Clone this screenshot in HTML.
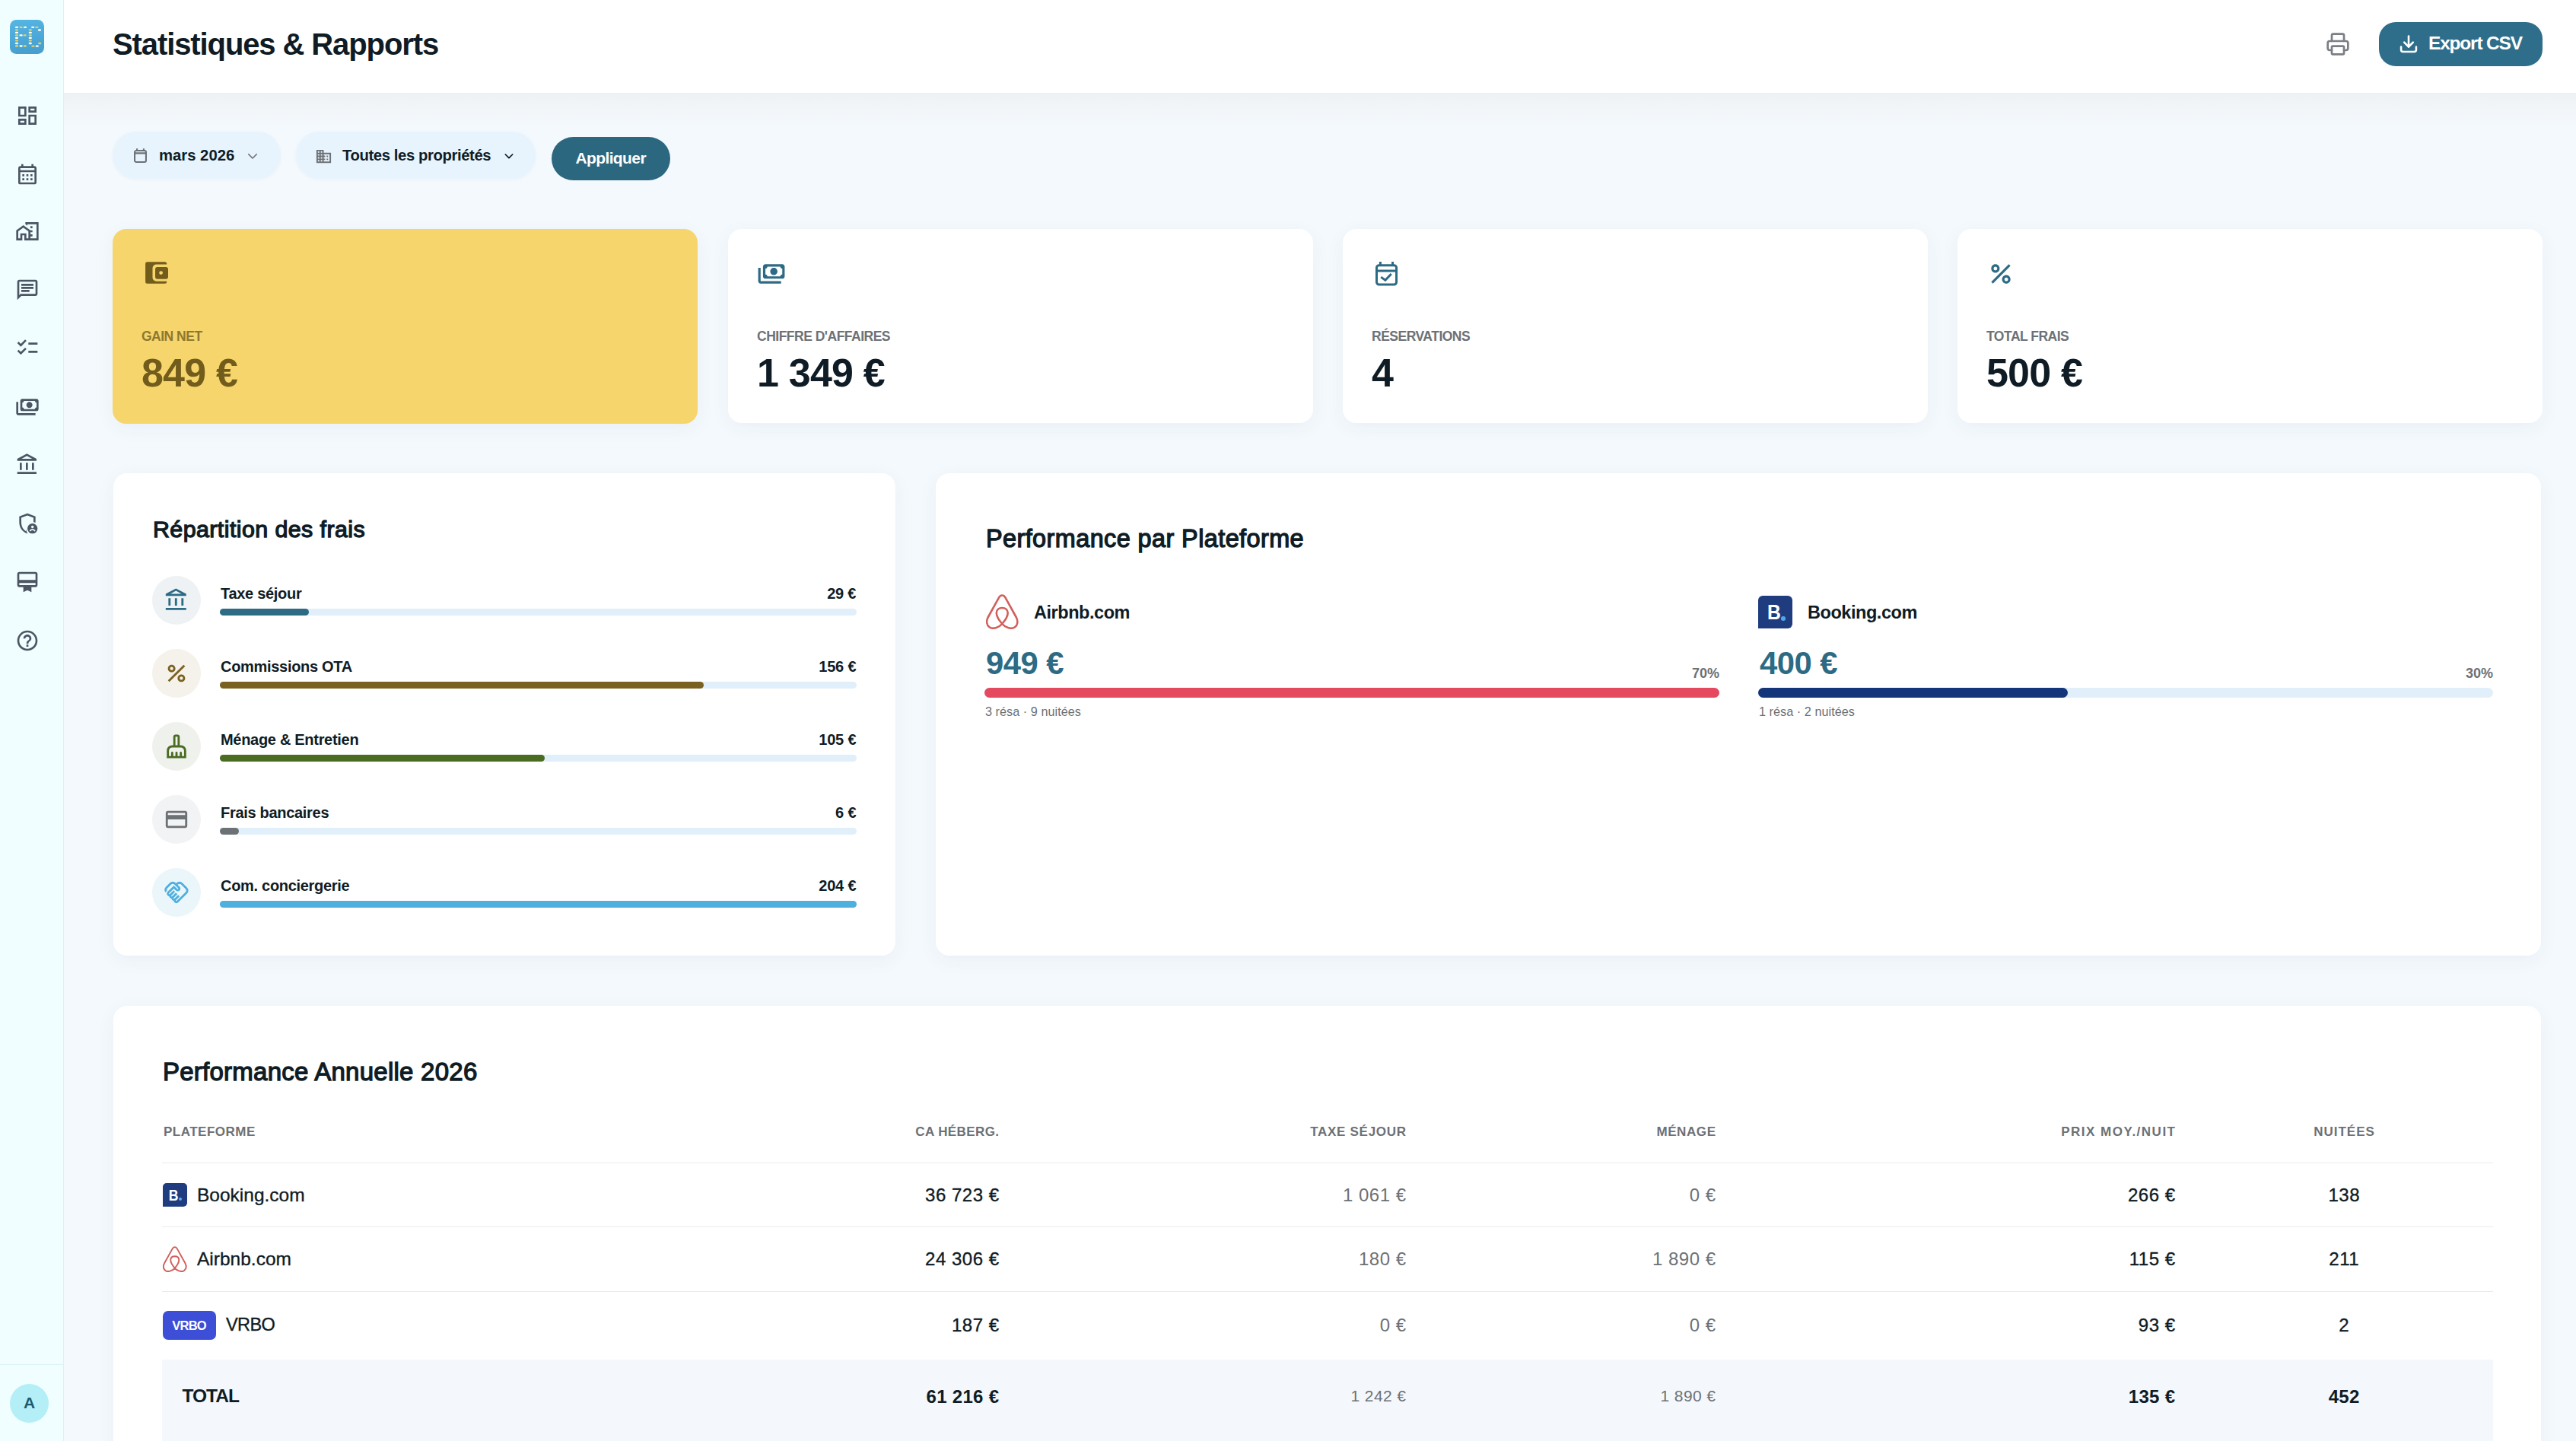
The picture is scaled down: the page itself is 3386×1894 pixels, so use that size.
<!DOCTYPE html>
<html><head><meta charset="utf-8"><title>Statistiques &amp; Rapports</title>
<style>
html,body{margin:0;padding:0;}
body{width:3386px;height:1894px;overflow:hidden;position:relative;background:#f3f7fb;font-family:"Liberation Sans",sans-serif;}
.t{position:absolute;line-height:1;white-space:nowrap;}
.r{position:absolute;}
</style></head><body>
<div class="r" style="left:84px;top:0px;width:3302px;height:1894px;background:#f4f9fd;border-radius:0px;"></div>
<div class="r" style="left:84px;top:122px;width:3302px;height:45px;background:linear-gradient(180deg,#edf1f4 0%,#f1f5f8 40%,#f4f9fd 100%);border-radius:0px;"></div>
<div class="r" style="left:0px;top:0px;width:84px;height:1894px;background:#f0feff;border-radius:0px;border-right:1px solid #dcf2f5;box-sizing:border-box;"></div>
<div class="r" style="left:13px;top:26px;width:45px;height:45px;border-radius:8.5px;background:linear-gradient(170deg,#55b6e4 0%,#4aa6d6 60%,#459dcc 100%);overflow:hidden"><svg width="45" height="45" viewBox="0 0 45 45" style="position:absolute;left:0;top:0"><rect x="6.9" y="8.65" width="4.2" height="2.3" rx="1.1" fill="#ffffff"/><rect x="6.9" y="12.15" width="4.2" height="2.3" rx="1.1" fill="#e6cf63"/><rect x="6.9" y="15.75" width="4.2" height="2.3" rx="1.1" fill="#ffffff"/><rect x="6.9" y="19.25" width="4.2" height="2.3" rx="1.1" fill="#e6cf63"/><rect x="6.9" y="22.75" width="4.2" height="2.3" rx="1.1" fill="#ffffff"/><rect x="6.9" y="26.15" width="4.2" height="2.3" rx="1.1" fill="#e6cf63"/><rect x="6.9" y="29.85" width="4.2" height="2.3" rx="1.1" fill="#ffffff"/><rect x="6.9" y="33.35" width="4.2" height="2.3" rx="1.1" fill="#e6cf63"/><rect x="12.5" y="8.65" width="4.2" height="2.3" rx="1.1" fill="#e6cf63"/><rect x="17.9" y="8.65" width="4.2" height="2.3" rx="1.1" fill="#ffffff"/><rect x="12.5" y="19.25" width="4.2" height="2.3" rx="1.1" fill="#ffffff"/><rect x="17.5" y="19.25" width="4.2" height="2.3" rx="1.1" fill="#e6cf63"/><rect x="12.5" y="33.35" width="4.2" height="2.3" rx="1.1" fill="#ffffff"/><rect x="17.7" y="33.35" width="4.2" height="2.3" rx="1.1" fill="#e6cf63"/><rect x="24.7" y="12.15" width="4.2" height="2.3" rx="1.1" fill="#e6cf63"/><rect x="24.7" y="15.75" width="4.2" height="2.3" rx="1.1" fill="#ffffff"/><rect x="24.7" y="19.25" width="4.2" height="2.3" rx="1.1" fill="#e6cf63"/><rect x="24.7" y="22.75" width="4.2" height="2.3" rx="1.1" fill="#ffffff"/><rect x="24.7" y="26.15" width="4.2" height="2.3" rx="1.1" fill="#e6cf63"/><rect x="24.7" y="29.85" width="4.2" height="2.3" rx="1.1" fill="#ffffff"/><rect x="28.1" y="8.65" width="4.2" height="2.3" rx="1.1" fill="#ffffff"/><rect x="33.3" y="8.65" width="4.2" height="2.3" rx="1.1" fill="#e6cf63"/><rect x="36.9" y="12.35" width="4.2" height="2.3" rx="1.1" fill="#ffffff"/><rect x="28.3" y="33.45" width="4.2" height="2.3" rx="1.1" fill="#e6cf63"/><rect x="33.7" y="33.45" width="4.2" height="2.3" rx="1.1" fill="#ffffff"/><rect x="37.1" y="29.85" width="4.2" height="2.3" rx="1.1" fill="#e6cf63"/></svg></div>
<svg class="r" style="left:19.5px;top:135.6px;width:32px;height:32px;" viewBox="0 0 24 24" fill="#4b5563"><path d="M19 5v2h-4V5h4M9 5v6H5V5h4m10 8v6h-4v-6h4M9 17v2H5v-2h4M21 3h-8v6h8V3zM11 3H3v10h8V3zm10 8h-8v10h8V11zm-10 4H3v6h8v-6z"/></svg>
<svg class="r" style="left:19.5px;top:213px;width:32px;height:32px;" viewBox="0 0 24 24" fill="#4b5563"><path d="M19 4h-1V2h-2v2H8V2H6v2H5c-1.11 0-1.99.9-1.99 2L3 20a2 2 0 0 0 2 2h14c1.1 0 2-.9 2-2V6c0-1.1-.9-2-2-2zm0 16H5V10h14v10zm0-12H5V6h14v2zM9 14H7v-2h2v2zm4 0h-2v-2h2v2zm4 0h-2v-2h2v2zm-8 4H7v-2h2v2zm4 0h-2v-2h2v2zm4 0h-2v-2h2v2z"/></svg>
<svg class="r" style="left:19.5px;top:288px;width:32px;height:32px;" viewBox="0 0 24 24" fill="#4b5563"><path d="M1 11v10h6v-5h2v5h6V11L8 6l-7 5zm12 8h-2v-5H5v5H3v-7l5-3.5 5 3.5v7zm4-12h-2v2h2V7zm0 4h-2v2h2v-2zm0 4h-2v2h2v-2zm0 4h-2v2h2v-2zM10 3v1.97l2 1.43V5h9v14h-4v2h6V3H10z"/></svg>
<svg class="r" style="left:19.5px;top:365px;width:32px;height:32px;" viewBox="0 0 24 24" fill="#4b5563"><path d="M4 4h16v12H5.17L4 17.17V4m0-2c-1.1 0-1.99.9-1.99 2L2 22l4-4h14c1.1 0 2-.9 2-2V4c0-1.1-.9-2-2-2H4zm2 10h8v2H6v-2zm0-3h12v2H6V9zm0-3h12v2H6V6z"/></svg>
<svg class="r" style="left:19.5px;top:441px;width:32px;height:32px;" viewBox="0 0 24 24" fill="#4b5563"><path d="M22 7h-9v2h9V7zm0 8h-9v2h9v-2zM5.54 11L2 7.46l1.41-1.41 2.12 2.12 4.24-4.24 1.41 1.41L5.54 11zm0 8L2 15.46l1.41-1.41 2.12 2.12 4.24-4.24 1.41 1.41L5.54 19z"/></svg>
<svg class="r" style="left:19.5px;top:519px;width:32px;height:32px;" viewBox="0 0 24 24" fill="#4b5563"><g transform="translate(24,0) scale(-1,1)"><path d="M19 14V6c0-1.1-.9-2-2-2H3c-1.1 0-2 .9-2 2v8c0 1.1.9 2 2 2h14c1.1 0 2-.9 2-2zm-2 0H3V6h14v8zm-7-7c-1.66 0-3 1.34-3 3s1.34 3 3 3 3-1.34 3-3-1.34-3-3-3zm13 0v11c0 1.1-.9 2-2 2H4v-2h17V7h2z"/><circle cx="3" cy="6" r="1.6"/><circle cx="17" cy="6" r="1.6"/><circle cx="3" cy="14" r="1.6"/><circle cx="17" cy="14" r="1.6"/></g></svg>
<svg class="r" style="left:19.5px;top:595px;width:32px;height:32px;" viewBox="0 0 24 24" fill="#4b5563"><path d="M6.5 10h-2v7h2v-7zm6 0h-2v7h2v-7zm8.5 9H2v2h19v-2zm-2.5-9h-2v7h2v-7zm-7-6.74L16.71 6H6.29l5.21-2.74m0-2.26L2 6v2h19V6l-9.5-5z"/></svg>
<svg class="r" style="left:19.5px;top:672px;width:32px;height:32px;" viewBox="0 0 24 24" fill="#4b5563"><path d="M12 2 4 5v6.09c0 5.05 3.41 9.76 8 10.91.1-.03.2-.06.3-.09A6.97 6.97 0 0 1 11 18c0-.35.03-.7.08-1.05C11 16.9 11 19.8 10.6 19.6 7.9 18.2 6 14.9 6 11.09V6.39l6-2.25 6 2.25v4.26c.72.1 1.4.3 2 .61V5l-8-3z"/><circle cx="17" cy="17" r="5"/><circle cx="17" cy="15.3" r="1.3" fill="#effcfe"/><path d="M14.5 19.6c.5-1 1.5-1.7 2.5-1.7s2 .7 2.5 1.7" stroke="#effcfe" stroke-width="1.3" fill="none"/></svg>
<svg class="r" style="left:19.5px;top:749px;width:32px;height:32px;" viewBox="0 0 24 24" fill="#4b5563"><path d="M20 2H4c-1.11 0-2 .89-2 2v11c0 1.11.89 2 2 2h4v5l4-2 4 2v-5h4c1.11 0 2-.89 2-2V4c0-1.11-.89-2-2-2zm0 13H4v-2h16v2zm0-5H4V4h16v6z"/></svg>
<svg class="r" style="left:19.5px;top:826px;width:32px;height:32px;" viewBox="0 0 24 24" fill="#4b5563"><path d="M11 18h2v-2h-2v2zm1-16C6.48 2 2 6.48 2 12s4.48 10 10 10 10-4.48 10-10S17.52 2 12 2zm0 18c-4.41 0-8-3.59-8-8s3.59-8 8-8 8 3.59 8 8-3.59 8-8 8zm0-14c-2.21 0-4 1.79-4 4h2c0-1.1.9-2 2-2s2 .9 2 2c0 2-3 1.75-3 5h2c0-2.25 3-2.5 3-5 0-2.21-1.79-4-4-4z"/></svg>
<div class="r" style="left:0px;top:1793px;width:83px;height:1px;background:#dcf2f5;border-radius:0px;"></div>
<div class="r" style="left:13px;top:1819px;width:51px;height:51px;border-radius:50%;background:#b4eef7;"></div>
<div class="t" style="top:1833.2px;font-size:21px;font-weight:700;color:#1e5a6f;left:-361.5px;width:800px;text-align:center;">A</div>
<div class="r" style="left:84px;top:0px;width:3302px;height:122px;background:#ffffff;border-radius:0px;"></div>
<div class="t" style="top:38.4px;font-size:40px;font-weight:700;color:#0f1c25;letter-spacing:-1.1px;left:148px;">Statistiques &amp; Rapports</div>
<svg class="r" style="left:3056px;top:42px;width:34px;height:32px" viewBox="0 0 24 24" fill="none" stroke="#7b7f84" stroke-width="2" stroke-linecap="round" stroke-linejoin="round">
<path d="M6 9V3.5A1.5 1.5 0 0 1 7.5 2h9A1.5 1.5 0 0 1 18 3.5V9"/><path d="M6 18H4a2 2 0 0 1-2-2v-5a2 2 0 0 1 2-2h16a2 2 0 0 1 2 2v5a2 2 0 0 1-2 2h-2"/><rect x="6" y="14" width="12" height="8" rx="1"/></svg>
<div class="r" style="left:3127px;top:29px;width:215px;height:58px;background:#2f6e8b;border-radius:22px;"></div>
<svg class="r" style="left:3152px;top:44px;width:28px;height:28px" viewBox="0 0 24 24" fill="none" stroke="#fff" stroke-width="2.2" stroke-linecap="round" stroke-linejoin="round">
<path d="M12 3v12"/><path d="M7 10l5 5 5-5"/><path d="M3.5 15v3.5A2 2 0 0 0 5.5 20.5h13a2 2 0 0 0 2-2V15"/></svg>
<div class="t" style="top:45.2px;font-size:24.5px;font-weight:700;color:#ffffff;letter-spacing:-1.2px;left:3192px;">Export CSV</div>
<div class="r" style="left:148px;top:173px;width:221px;height:62px;background:#e8f4fd;border-radius:31px;box-shadow:0 1px 4px rgba(30,60,90,0.04);"></div>
<svg class="r" style="left:176px;top:195px;width:17px;height:19px" viewBox="0 0 17 19" fill="none" stroke="#6c7176" stroke-width="2.1">
<rect x="1.05" y="3.05" width="14.9" height="14.9" rx="2"/><path d="M1.05 6.4h14.9M4.1 0.3v2.8M12.9 0.3v2.8"/></svg>
<div class="t" style="top:193.8px;font-size:20.3px;font-weight:700;color:#0f1c25;left:209px;">mars 2026</div>
<svg class="r" style="left:322px;top:196px;width:20px;height:18px" viewBox="0 0 24 24" fill="none" stroke="#6c7176" stroke-width="2.2" stroke-linecap="round" stroke-linejoin="round"><path d="M5 9l7 7 7-7"/></svg>
<div class="r" style="left:389px;top:173px;width:315px;height:62px;background:#e8f4fd;border-radius:31px;box-shadow:0 1px 4px rgba(30,60,90,0.04);"></div>
<svg class="r" style="left:414px;top:194px;width:23px;height:23px" viewBox="0 0 24 24" fill="#6c7176"><path d="M12 7V3H2v18h20V7H12zM6 19H4v-2h2v2zm0-4H4v-2h2v2zm0-4H4V9h2v2zm0-4H4V5h2v2zm4 12H8v-2h2v2zm0-4H8v-2h2v2zm0-4H8V9h2v2zm0-4H8V5h2v2zm10 12h-8v-2h2v-2h-2v-2h2v-2h-2V9h8v10zm-2-8h-2v2h2v-2zm0 4h-2v2h2v-2z"/></svg>
<div class="t" style="top:193.8px;font-size:20.3px;font-weight:700;color:#0f1c25;letter-spacing:-0.4px;left:450px;">Toutes les propriétés</div>
<svg class="r" style="left:660px;top:197px;width:18px;height:16px" viewBox="0 0 24 24" fill="none" stroke="#0f1c25" stroke-width="2.6" stroke-linecap="round" stroke-linejoin="round"><path d="M5 9l7 7 7-7"/></svg>
<div class="r" style="left:725px;top:180px;width:156px;height:57px;background:#2c6780;border-radius:28.5px;"></div>
<div class="t" style="top:197.2px;font-size:21px;font-weight:700;color:#ffffff;letter-spacing:-0.6px;left:402.7px;width:800px;text-align:center;">Appliquer</div>
<div class="r" style="left:148px;top:301px;width:769px;height:256px;background:#f6d56c;border-radius:18px;box-shadow:0 6px 26px rgba(40,60,90,0.05);"></div>
<svg class="r" style="left:190px;top:343px;width:32px;height:31px" viewBox="0 0 32 31" fill="#715c1c"><path d="M3.6 1.2H26.7A2.5 2.5 0 0 1 29.2 3.7V4.5H15.5A5 5 0 0 0 10.5 9.5V21.7A5 5 0 0 0 15.5 26.7H29.2V27.35A2.5 2.5 0 0 1 26.7 29.85H3.6A2.5 2.5 0 0 1 1.1 27.35V3.7A2.5 2.5 0 0 1 3.6 1.2Z"/><path fill-rule="evenodd" d="M17 8.1H28A3 3 0 0 1 31 11.1V20.8A3 3 0 0 1 28 23.8H17A3 3 0 0 1 14 20.8V11.1A3 3 0 0 1 17 8.1ZM21.6 13.2A2.4 2.4 0 1 0 21.6 18A2.4 2.4 0 1 0 21.6 13.2Z"/></svg>
<div class="t" style="top:434.0px;font-size:17.5px;font-weight:700;color:#8d7830;letter-spacing:-0.5px;left:186px;">GAIN NET</div>
<div class="t" style="top:463.5px;font-size:52px;font-weight:700;color:#715c1c;letter-spacing:-0.8px;left:186px;">849 €</div>
<div class="r" style="left:957px;top:301px;width:769px;height:255px;background:#ffffff;border-radius:18px;box-shadow:0 6px 26px rgba(40,60,90,0.05);"></div>
<svg class="r" style="left:995px;top:341px;width:38px;height:38px;color:#2d6a84;" viewBox="0 0 24 24" fill="#2d6a84"><g transform="translate(24,0) scale(-1,1)"><path d="M19 14V6c0-1.1-.9-2-2-2H3c-1.1 0-2 .9-2 2v8c0 1.1.9 2 2 2h14c1.1 0 2-.9 2-2zm-2 0H3V6h14v8zm-7-7c-1.66 0-3 1.34-3 3s1.34 3 3 3 3-1.34 3-3-1.34-3-3-3zm13 0v11c0 1.1-.9 2-2 2H4v-2h17V7h2z"/><circle cx="3" cy="6" r="1.6"/><circle cx="17" cy="6" r="1.6"/><circle cx="3" cy="14" r="1.6"/><circle cx="17" cy="14" r="1.6"/></g></svg>
<div class="t" style="top:434.0px;font-size:17.5px;font-weight:700;color:#6c7176;letter-spacing:-0.5px;left:995px;">CHIFFRE D'AFFAIRES</div>
<div class="t" style="top:463.5px;font-size:52px;font-weight:700;color:#0f1c25;letter-spacing:-0.8px;left:995px;">1 349 €</div>
<div class="r" style="left:1765px;top:301px;width:769px;height:255px;background:#ffffff;border-radius:18px;box-shadow:0 6px 26px rgba(40,60,90,0.05);"></div>
<svg class="r" style="left:1803px;top:341px;width:38px;height:38px;color:#2d6a84;" viewBox="0 0 24 24" fill="#2d6a84"><g fill="none" stroke="currentColor" stroke-width="1.9"><rect x="4.1" y="4.85" width="16.45" height="16" rx="2"/><path d="M4.1 9.4h16.45M7.2 1.9v3M17.4 1.9v3"/><path d="M7.7 14.6l3.6 2.6 5-5.2" stroke-linecap="butt" stroke-linejoin="miter"/></g></svg>
<div class="t" style="top:434.0px;font-size:17.5px;font-weight:700;color:#6c7176;letter-spacing:-0.5px;left:1803px;">RÉSERVATIONS</div>
<div class="t" style="top:463.5px;font-size:52px;font-weight:700;color:#0f1c25;letter-spacing:-0.8px;left:1803px;">4</div>
<div class="r" style="left:2573px;top:301px;width:769px;height:255px;background:#ffffff;border-radius:18px;box-shadow:0 6px 26px rgba(40,60,90,0.05);"></div>
<svg class="r" style="left:2611px;top:341px;width:38px;height:38px;color:#2d6a84;" viewBox="0 0 24 24" fill="#2d6a84"><path d="M7.5 11C9.43 11 11 9.43 11 7.5S9.43 4 7.5 4 4 5.57 4 7.5 5.57 11 7.5 11zm0-5C8.33 6 9 6.67 9 7.5S8.33 9 7.5 9 6 8.33 6 7.5 6.67 6 7.5 6zM4.0025 18.5832 18.59 3.9955l1.4142 1.4142L5.4167 19.9974zM16.5 13c-1.93 0-3.5 1.57-3.5 3.5s1.57 3.5 3.5 3.5 3.5-1.57 3.5-3.5-1.57-3.5-3.5-3.5zm0 5c-.83 0-1.5-.67-1.5-1.5s.67-1.5 1.5-1.5 1.5.67 1.5 1.5-.67 1.5-1.5 1.5z"/></svg>
<div class="t" style="top:434.0px;font-size:17.5px;font-weight:700;color:#6c7176;letter-spacing:-0.5px;left:2611px;">TOTAL FRAIS</div>
<div class="t" style="top:463.5px;font-size:52px;font-weight:700;color:#0f1c25;letter-spacing:-0.8px;left:2611px;">500 €</div>
<div class="r" style="left:149px;top:622px;width:1028px;height:634px;background:#ffffff;border-radius:18px;box-shadow:0 6px 26px rgba(40,60,90,0.05);"></div>
<div class="t" style="top:680.2px;font-size:30.4px;font-weight:400;color:#0f1c25;letter-spacing:0.42px;left:201px;-webkit-text-stroke:1.3px #0f1c25;">Répartition des frais</div>
<div class="r" style="left:200px;top:756.6px;width:64px;height:64px;border-radius:50%;background:#eef2f5"></div>
<svg class="r" style="left:215px;top:771.6px;width:34px;height:34px;" viewBox="0 0 24 24" fill="#2d6a84"><path d="M6.5 10h-2v7h2v-7zm6 0h-2v7h2v-7zm8.5 9H2v2h19v-2zm-2.5-9h-2v7h2v-7zm-7-6.74L16.71 6H6.29l5.21-2.74m0-2.26L2 6v2h19V6l-9.5-5z"/></svg>
<div class="t" style="top:769.9px;font-size:20px;font-weight:700;color:#0f1c25;letter-spacing:-0.3px;left:290px;">Taxe séjour</div>
<div class="t" style="top:769.9px;font-size:20px;font-weight:700;color:#0f1c25;letter-spacing:-0.2px;right:2260.7px;text-align:right;">29 €</div>
<div class="r" style="left:289px;top:800px;width:837px;height:9px;background:#e1effa;border-radius:5px;"></div>
<div class="r" style="left:289px;top:800px;width:117.18px;height:9px;background:#2d6a84;border-radius:5px;"></div>
<div class="r" style="left:200px;top:852.6px;width:64px;height:64px;border-radius:50%;background:#f4f2ea"></div>
<svg class="r" style="left:215px;top:867.6px;width:34px;height:34px;" viewBox="0 0 24 24" fill="#7a6120"><path d="M7.5 11C9.43 11 11 9.43 11 7.5S9.43 4 7.5 4 4 5.57 4 7.5 5.57 11 7.5 11zm0-5C8.33 6 9 6.67 9 7.5S8.33 9 7.5 9 6 8.33 6 7.5 6.67 6 7.5 6zM4.0025 18.5832 18.59 3.9955l1.4142 1.4142L5.4167 19.9974zM16.5 13c-1.93 0-3.5 1.57-3.5 3.5s1.57 3.5 3.5 3.5 3.5-1.57 3.5-3.5-1.57-3.5-3.5-3.5zm0 5c-.83 0-1.5-.67-1.5-1.5s.67-1.5 1.5-1.5 1.5.67 1.5 1.5-.67 1.5-1.5 1.5z"/></svg>
<div class="t" style="top:865.9px;font-size:20px;font-weight:700;color:#0f1c25;letter-spacing:-0.3px;left:290px;">Commissions OTA</div>
<div class="t" style="top:865.9px;font-size:20px;font-weight:700;color:#0f1c25;letter-spacing:-0.2px;right:2260.7px;text-align:right;">156 €</div>
<div class="r" style="left:289px;top:896px;width:837px;height:9px;background:#e1effa;border-radius:5px;"></div>
<div class="r" style="left:289px;top:896px;width:636.12px;height:9px;background:#7a6120;border-radius:5px;"></div>
<div class="r" style="left:200px;top:948.6px;width:64px;height:64px;border-radius:50%;background:#eff2ec"></div>
<svg class="r" style="left:215px;top:963.6px;width:34px;height:34px;" viewBox="0 0 24 24" fill="#4a6b22"><path d="M16 11h-1V3c0-1.1-.9-2-2-2h-2c-1.1 0-2 .9-2 2v8H8c-2.76 0-5 2.24-5 5v7h18v-7c0-2.76-2.24-5-5-5zm-5-8h2v8h-2V3zm8 18h-2v-3c0-.55-.45-1-1-1s-1 .45-1 1v3h-2v-3c0-.55-.45-1-1-1s-1 .45-1 1v3H9v-3c0-.55-.45-1-1-1s-1 .45-1 1v3H5v-5c0-1.65 1.35-3 3-3h8c1.65 0 3 1.35 3 3v5z"/></svg>
<div class="t" style="top:961.9px;font-size:20px;font-weight:700;color:#0f1c25;letter-spacing:-0.3px;left:290px;">Ménage &amp; Entretien</div>
<div class="t" style="top:961.9px;font-size:20px;font-weight:700;color:#0f1c25;letter-spacing:-0.2px;right:2260.7px;text-align:right;">105 €</div>
<div class="r" style="left:289px;top:992px;width:837px;height:9px;background:#e1effa;border-radius:5px;"></div>
<div class="r" style="left:289px;top:992px;width:426.87px;height:9px;background:#4a6b22;border-radius:5px;"></div>
<div class="r" style="left:200px;top:1044.6px;width:64px;height:64px;border-radius:50%;background:#f2f3f4"></div>
<svg class="r" style="left:215px;top:1059.6px;width:34px;height:34px;" viewBox="0 0 24 24" fill="#6c7176"><path d="M20 4H4c-1.11 0-1.99.89-1.99 2L2 18c0 1.11.89 2 2 2h16c1.11 0 2-.89 2-2V6c0-1.11-.89-2-2-2zm0 14H4v-6h16v6zm0-10H4V6h16v2z"/></svg>
<div class="t" style="top:1057.9px;font-size:20px;font-weight:700;color:#0f1c25;letter-spacing:-0.3px;left:290px;">Frais bancaires</div>
<div class="t" style="top:1057.9px;font-size:20px;font-weight:700;color:#0f1c25;letter-spacing:-0.2px;right:2260.7px;text-align:right;">6 €</div>
<div class="r" style="left:289px;top:1088px;width:837px;height:9px;background:#e1effa;border-radius:5px;"></div>
<div class="r" style="left:289px;top:1088px;width:25.11px;height:9px;background:#6c7176;border-radius:5px;"></div>
<div class="r" style="left:200px;top:1140.6px;width:64px;height:64px;border-radius:50%;background:#ebf6fb"></div>
<svg class="r" style="left:215px;top:1155.6px;width:34px;height:34px;" viewBox="0 0 24 24" fill="#4fb0de"><path d="M12.22 19.85c-.18.18-.5.21-.71 0a.504.504 0 0 1 0-.71l3.39-3.39-1.41-1.41-3.39 3.39c-.19.2-.51.19-.71 0a.504.504 0 0 1 0-.71l3.39-3.39-1.41-1.41-3.39 3.39c-.18.18-.5.21-.71 0a.513.513 0 0 1 0-.71l3.39-3.39-1.42-1.41-3.39 3.39c-.18.18-.5.21-.71 0a.513.513 0 0 1 0-.71L9.52 8.4l1.87 1.86c.95.95 2.59.94 3.54 0 .98-.98.98-2.56 0-3.54l-1.86-1.86.28-.28c.78-.78 2.05-.78 2.83 0l4.24 4.24c.78.78.78 2.05 0 2.830l-8.2 8.2zm9.61-6.78a4.008 4.008 0 0 0 0-5.66l-4.24-4.24a4.008 4.008 0 0 0-5.660 0l-.28.28-.28-.28a4.008 4.008 0 0 0-5.66 0L2.17 6.71a3.992 3.992 0 0 0-.4 5.19l1.45-1.45a2 2 0 0 1 .37-2.33l3.54-3.54c.78-.78 2.05-.78 2.83 0l3.56 3.56c.18.18.21.5 0 .71-.21.21-.53.18-.71 0L9.52 5.57l-5.8 5.79c-.98.97-.98 2.56 0 3.54.39.39.89.63 1.42.7a2.458 2.458 0 0 0 2.12 2.12 2.458 2.458 0 0 0 2.12 2.12c.07.54.31 1.03.7 1.420.47.47 1.1.73 1.77.73.67 0 1.3-.26 1.77-.73l8.21-8.19z"/></svg>
<div class="t" style="top:1153.9px;font-size:20px;font-weight:700;color:#0f1c25;letter-spacing:-0.3px;left:290px;">Com. conciergerie</div>
<div class="t" style="top:1153.9px;font-size:20px;font-weight:700;color:#0f1c25;letter-spacing:-0.2px;right:2260.7px;text-align:right;">204 €</div>
<div class="r" style="left:289px;top:1184px;width:837px;height:9px;background:#e1effa;border-radius:5px;"></div>
<div class="r" style="left:289px;top:1184px;width:837.0px;height:9px;background:#4fb0de;border-radius:5px;"></div>
<div class="r" style="left:1230px;top:622px;width:2110px;height:634px;background:#ffffff;border-radius:18px;box-shadow:0 6px 26px rgba(40,60,90,0.05);"></div>
<div class="t" style="top:691.9px;font-size:32.4px;font-weight:400;color:#0f1c25;letter-spacing:0.43px;left:1296px;-webkit-text-stroke:1.3px #0f1c25;">Performance par Plateforme</div>
<div class="t" style="top:794.1px;font-size:23.5px;font-weight:700;color:#0f1c25;letter-spacing:-0.45px;left:1359px;">Airbnb.com</div>
<svg class="r" style="left:1296px;top:781px;width:42.5px;height:46px" viewBox="0 0 42.5 46" stroke="#d0605c"><path d="M21.25 39C17 44 9 46.5 4.5 43.2C0.8 40.5 0.2 35.5 2.6 30.5L17.2 4.2C19.2 0.6 23.3 0.6 25.3 4.2L39.9 30.5C42.3 35.5 41.7 40.5 38 43.2C33.5 46.5 25.5 44 21.25 39ZM21.25 39C16.5 33.5 13.8 29 13.8 24.8C13.8 20.5 17 18 21.25 18C25.5 18 28.7 20.5 28.7 24.8C28.7 29 26 33.5 21.25 39Z" fill="none" stroke-width="2.6" stroke-linejoin="round"/></svg>
<div class="t" style="top:850.8px;font-size:41.8px;font-weight:700;color:#2d6a84;letter-spacing:-0.5px;left:1296px;">949 €</div>
<div class="t" style="top:875.8px;font-size:18px;font-weight:700;color:#6c7176;right:1126px;text-align:right;">70%</div>
<div class="r" style="left:1294px;top:904px;width:966px;height:13px;background:#e1effa;border-radius:7px;"></div>
<div class="r" style="left:1294px;top:904px;width:966.0px;height:13px;background:#e5495f;border-radius:7px;"></div>
<div class="t" style="top:926.9px;font-size:16.2px;font-weight:400;color:#6c7176;letter-spacing:0.05px;left:1295px;">3 résa · 9 nuitées</div>
<div class="t" style="top:794.1px;font-size:23.5px;font-weight:700;color:#0f1c25;letter-spacing:-0.45px;left:2376px;">Booking.com</div>
<div class="r" style="left:2311px;top:783px;width:45px;height:43px;background:#1f3c7f;border-radius:6px 6px 6px 0px;"></div>
<div class="t" style="top:791.3px;font-size:28px;font-weight:700;color:#fff;left:1932.0px;width:800px;text-align:center;transform:scaleX(0.88);">B</div>
<div class="r" style="left:2341px;top:810px;width:5.5px;height:5.5px;border-radius:50%;background:#4fa8ea"></div>
<div class="t" style="top:850.8px;font-size:41.8px;font-weight:700;color:#2d6a84;letter-spacing:-0.5px;left:2313px;">400 €</div>
<div class="t" style="top:875.8px;font-size:18px;font-weight:700;color:#6c7176;right:109px;text-align:right;">30%</div>
<div class="r" style="left:2311px;top:904px;width:966px;height:13px;background:#e1effa;border-radius:7px;"></div>
<div class="r" style="left:2311px;top:904px;width:407.16543730242364px;height:13px;background:#14357a;border-radius:7px;"></div>
<div class="t" style="top:926.9px;font-size:16.2px;font-weight:400;color:#6c7176;letter-spacing:0.05px;left:2312px;">1 résa · 2 nuitées</div>
<div class="r" style="left:149px;top:1322px;width:3191px;height:700px;background:#ffffff;border-radius:18px;box-shadow:0 6px 26px rgba(40,60,90,0.05);"></div>
<div class="t" style="top:1391.7px;font-size:33px;font-weight:400;color:#0f1c25;letter-spacing:0.25px;left:214px;-webkit-text-stroke:1.3px #0f1c25;">Performance Annuelle 2026</div>
<div class="t" style="top:1478.6px;font-size:17px;font-weight:700;color:#6c7176;letter-spacing:0.5px;left:215px;">PLATEFORME</div>
<div class="t" style="top:1478.6px;font-size:17px;font-weight:700;color:#6c7176;letter-spacing:0.4px;right:2072.6px;text-align:right;">CA HÉBERG.</div>
<div class="t" style="top:1478.6px;font-size:17px;font-weight:700;color:#6c7176;letter-spacing:0.7px;right:1537.3px;text-align:right;">TAXE SÉJOUR</div>
<div class="t" style="top:1478.6px;font-size:17px;font-weight:700;color:#6c7176;letter-spacing:0.6px;right:1130.4px;text-align:right;">MÉNAGE</div>
<div class="t" style="top:1478.6px;font-size:17px;font-weight:700;color:#6c7176;letter-spacing:1.5px;right:525.5px;text-align:right;">PRIX MOY./NUIT</div>
<div class="t" style="top:1478.6px;font-size:17px;font-weight:700;color:#6c7176;letter-spacing:1.0px;left:2681.5px;width:800px;text-align:center;">NUITÉES</div>
<div class="r" style="left:213px;top:1528px;width:3064px;height:1px;background:#e8ecf0;border-radius:0px;"></div>
<div class="r" style="left:213px;top:1612px;width:3064px;height:1px;background:#e8ecf0;border-radius:0px;"></div>
<div class="r" style="left:213px;top:1697px;width:3064px;height:1px;background:#e8ecf0;border-radius:0px;"></div>
<div class="r" style="left:213px;top:1787px;width:3064px;height:200px;background:#f4f8fc;border-radius:0px;"></div>
<div class="t" style="top:1558.5px;font-size:24.5px;font-weight:400;color:#0f1c25;left:259px;-webkit-text-stroke:0.35px #0f1c25;">Booking.com</div>
<div class="t" style="top:1558.9px;font-size:24px;font-weight:400;color:#0f1c25;letter-spacing:0.5px;right:2072.5px;text-align:right;-webkit-text-stroke:0.35px #0f1c25;">36 723 €</div>
<div class="t" style="top:1558.9px;font-size:24px;font-weight:400;color:#6c7176;letter-spacing:0.5px;right:1537.5px;text-align:right;">1 061 €</div>
<div class="t" style="top:1558.9px;font-size:24px;font-weight:400;color:#6c7176;letter-spacing:0.5px;right:1130.5px;text-align:right;">0 €</div>
<div class="t" style="top:1558.9px;font-size:24px;font-weight:400;color:#0f1c25;letter-spacing:0.5px;right:526.5px;text-align:right;-webkit-text-stroke:0.35px #0f1c25;">266 €</div>
<div class="t" style="top:1558.9px;font-size:24px;font-weight:400;color:#0f1c25;letter-spacing:0.5px;left:2681.25px;width:800px;text-align:center;-webkit-text-stroke:0.35px #0f1c25;">138</div>
<div class="t" style="top:1642.8px;font-size:24.5px;font-weight:400;color:#0f1c25;left:259px;-webkit-text-stroke:0.35px #0f1c25;">Airbnb.com</div>
<div class="t" style="top:1643.2px;font-size:24px;font-weight:400;color:#0f1c25;letter-spacing:0.5px;right:2072.5px;text-align:right;-webkit-text-stroke:0.35px #0f1c25;">24 306 €</div>
<div class="t" style="top:1643.2px;font-size:24px;font-weight:400;color:#6c7176;letter-spacing:0.5px;right:1537.5px;text-align:right;">180 €</div>
<div class="t" style="top:1643.2px;font-size:24px;font-weight:400;color:#6c7176;letter-spacing:0.5px;right:1130.5px;text-align:right;">1 890 €</div>
<div class="t" style="top:1643.2px;font-size:24px;font-weight:400;color:#0f1c25;letter-spacing:0.5px;right:526.5px;text-align:right;-webkit-text-stroke:0.35px #0f1c25;">115 €</div>
<div class="t" style="top:1643.2px;font-size:24px;font-weight:400;color:#0f1c25;letter-spacing:0.5px;left:2681.25px;width:800px;text-align:center;-webkit-text-stroke:0.35px #0f1c25;">211</div>
<div class="t" style="top:1730.1px;font-size:23.5px;font-weight:400;color:#0f1c25;letter-spacing:-0.6px;left:297px;-webkit-text-stroke:0.35px #0f1c25;">VRBO</div>
<div class="t" style="top:1729.7px;font-size:24px;font-weight:400;color:#0f1c25;letter-spacing:0.5px;right:2072.5px;text-align:right;-webkit-text-stroke:0.35px #0f1c25;">187 €</div>
<div class="t" style="top:1729.7px;font-size:24px;font-weight:400;color:#6c7176;letter-spacing:0.5px;right:1537.5px;text-align:right;">0 €</div>
<div class="t" style="top:1729.7px;font-size:24px;font-weight:400;color:#6c7176;letter-spacing:0.5px;right:1130.5px;text-align:right;">0 €</div>
<div class="t" style="top:1729.7px;font-size:24px;font-weight:400;color:#0f1c25;letter-spacing:0.5px;right:526.5px;text-align:right;-webkit-text-stroke:0.35px #0f1c25;">93 €</div>
<div class="t" style="top:1729.7px;font-size:24px;font-weight:400;color:#0f1c25;letter-spacing:0.5px;left:2681.25px;width:800px;text-align:center;-webkit-text-stroke:0.35px #0f1c25;">2</div>
<div class="r" style="left:214px;top:1555px;width:32px;height:31px;background:#1f3c7f;border-radius:5px 5px 5px 0px;"></div>
<div class="t" style="top:1560.6px;font-size:20.5px;font-weight:700;color:#fff;left:-171.7px;width:800px;text-align:center;transform:scaleX(0.86);">B</div>
<div class="r" style="left:235.2px;top:1574.3px;width:4px;height:4px;border-radius:50%;background:#5aaef0"></div>
<svg class="r" style="left:214px;top:1638px;width:31.5px;height:34px" viewBox="0 0 42.5 46" stroke="#d0605c"><path d="M21.25 39C17 44 9 46.5 4.5 43.2C0.8 40.5 0.2 35.5 2.6 30.5L17.2 4.2C19.2 0.6 23.3 0.6 25.3 4.2L39.9 30.5C42.3 35.5 41.7 40.5 38 43.2C33.5 46.5 25.5 44 21.25 39ZM21.25 39C16.5 33.5 13.8 29 13.8 24.8C13.8 20.5 17 18 21.25 18C25.5 18 28.7 20.5 28.7 24.8C28.7 29 26 33.5 21.25 39Z" fill="none" stroke-width="2.6" stroke-linejoin="round"/></svg>
<div class="r" style="left:214px;top:1723px;width:70px;height:38px;background:#3d4fd6;border-radius:7px;"></div>
<div class="t" style="top:1734.0px;font-size:16.5px;font-weight:700;color:#fff;letter-spacing:-0.8px;left:-151.4px;width:800px;text-align:center;">VRBO</div>
<div class="t" style="top:1823.3px;font-size:24.5px;font-weight:700;color:#0f1c25;letter-spacing:-1px;left:239.5px;">TOTAL</div>
<div class="t" style="top:1824.2px;font-size:24px;font-weight:700;color:#0f1c25;letter-spacing:0.3px;right:2072.7px;text-align:right;">61 216 €</div>
<div class="t" style="top:1824.4px;font-size:21px;font-weight:400;color:#6c7176;letter-spacing:0.4px;right:1537.6px;text-align:right;">1 242 €</div>
<div class="t" style="top:1824.4px;font-size:21px;font-weight:400;color:#6c7176;letter-spacing:0.4px;right:1130.6px;text-align:right;">1 890 €</div>
<div class="t" style="top:1824.2px;font-size:24px;font-weight:700;color:#0f1c25;letter-spacing:0.3px;right:526.7px;text-align:right;">135 €</div>
<div class="t" style="top:1824.2px;font-size:24px;font-weight:700;color:#0f1c25;letter-spacing:0.3px;left:2681.15px;width:800px;text-align:center;">452</div>
</body></html>
